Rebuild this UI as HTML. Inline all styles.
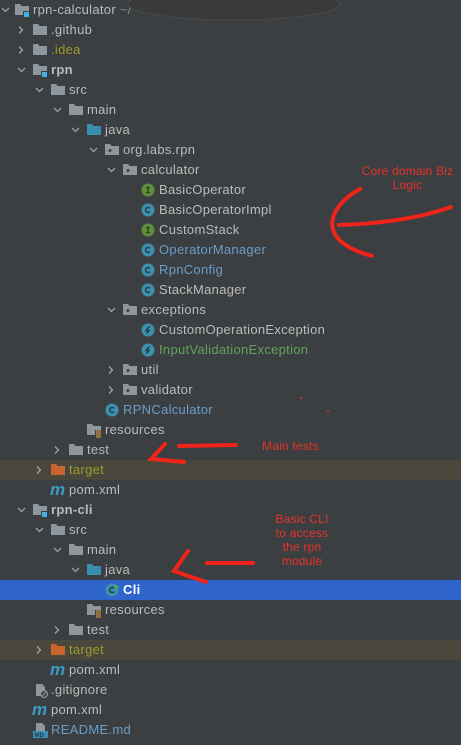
<!DOCTYPE html>
<html><head><meta charset="utf-8"><style>
body{margin:0;width:461px;height:745px;background:#3c3f41;overflow:hidden;position:relative;font-family:"Liberation Sans",sans-serif;font-size:13px;color:#bbbbbb}
.r{position:absolute;left:0;width:461px;height:20px;line-height:20px;white-space:nowrap}
.r svg{position:absolute;top:0}
.t{position:absolute;top:0;letter-spacing:0.3px}
.hl{background:#4a483c}
.sel{background:#2f65ca;color:#fff}
.b{font-weight:bold}
.ol{color:#9c9b2a}
.bl{color:#6a9dc8}
.gr{color:#62a35c}
.red{position:absolute;color:#e8322a;font-size:12px;text-align:center;line-height:14px;letter-spacing:0.2px}
</style></head><body>
<svg width="0" height="0" style="position:absolute">
<defs>
<symbol id="f" viewBox="0 0 16 20"><path d="M1 4h5l1.5 2H15v9H1z" fill="#8e979e"/></symbol>
<symbol id="fm" viewBox="0 0 16 20"><path d="M1 4h5l1.5 2H15v9H1z" fill="#8e979e"/><rect x="9" y="11" width="6" height="6" fill="#3c3f41"/><rect x="10" y="12" width="5" height="5" fill="#3fb1e3"/></symbol>
<symbol id="fb" viewBox="0 0 16 20"><path d="M1 4h5l1.5 2H15v9H1z" fill="#3a8fb1"/></symbol>
<symbol id="fo" viewBox="0 0 16 20"><path d="M1 4h5l1.5 2H15v9H1z" fill="#c8652e"/></symbol>
<symbol id="fp" viewBox="0 0 16 20"><path d="M1 4h5l1.5 2H15v9H1z" fill="#8e979e"/><circle cx="6" cy="10.5" r="1.5" fill="#3c3f41"/></symbol>
<symbol id="fr" viewBox="0 0 16 20"><path d="M1 4h5l1.5 2H15v9H1z" fill="#8e979e"/><rect x="9" y="10" width="7" height="8" fill="#3c3f41"/><path d="M10 11h5M10 13h5M10 15h5M10 17h5" stroke="#e0a040" stroke-width="1"/></symbol>
<symbol id="ch" viewBox="0 0 10 20"><path d="M2 8l3.5 3.5L9 8" fill="none" stroke="#a0a3a5" stroke-width="1.3"/></symbol>
<symbol id="cr" viewBox="0 0 10 20"><path d="M3 6.5l3.5 3.5L3 13.5" fill="none" stroke="#a0a3a5" stroke-width="1.3"/></symbol>
<symbol id="ci" viewBox="0 0 16 20"><circle cx="7" cy="10" r="6.5" fill="#5f8f3c"/><path d="M5 7.5h4M7 7.5v5M5 12.5h4" stroke="#2d3b22" stroke-width="1.3"/></symbol>
<symbol id="cc" viewBox="0 0 16 20"><circle cx="7" cy="10" r="6.5" fill="#3d8fb0"/><path d="M9 8.3a2.5 2.5 0 1 0 0 3.4" fill="none" stroke="#1f3b4a" stroke-width="1.4"/></symbol>
<symbol id="ce" viewBox="0 0 16 20"><circle cx="7" cy="10" r="6.5" fill="#3d8fb0"/><path d="M8.5 6.5L5 10.5h3L5.5 13.5" fill="none" stroke="#1f3b4a" stroke-width="1.4"/></symbol>
<symbol id="cm" viewBox="0 0 16 20"><text x="0" y="15" font-family="Liberation Sans" font-style="italic" font-weight="bold" font-size="17" fill="#3a9cc4">m</text></symbol>
</defs></svg>

<div class="r" style="top:0"><svg style="left:0" width="10" height="20"><use href="#ch"/></svg><svg style="left:14px" width="16" height="20"><use href="#fm"/></svg><span class="t" style="left:33px">rpn-calculator <span style="color:#888">~/</span></span></div>
<div class="r" style="top:20px"><svg style="left:16px" width="10" height="20"><use href="#cr"/></svg><svg style="left:32px" width="16" height="20"><use href="#f"/></svg><span class="t" style="left:51px">.github</span></div>
<div class="r" style="top:40px"><svg style="left:16px" width="10" height="20"><use href="#cr"/></svg><svg style="left:32px" width="16" height="20"><use href="#f"/></svg><span class="t ol" style="left:51px">.idea</span></div>
<div class="r" style="top:60px"><svg style="left:16px" width="10" height="20"><use href="#ch"/></svg><svg style="left:32px" width="16" height="20"><use href="#fm"/></svg><span class="t b" style="left:51px">rpn</span></div>
<div class="r" style="top:80px"><svg style="left:34px" width="10" height="20"><use href="#ch"/></svg><svg style="left:50px" width="16" height="20"><use href="#f"/></svg><span class="t" style="left:69px">src</span></div>
<div class="r" style="top:100px"><svg style="left:52px" width="10" height="20"><use href="#ch"/></svg><svg style="left:68px" width="16" height="20"><use href="#f"/></svg><span class="t" style="left:87px">main</span></div>
<div class="r" style="top:120px"><svg style="left:70px" width="10" height="20"><use href="#ch"/></svg><svg style="left:86px" width="16" height="20"><use href="#fb"/></svg><span class="t" style="left:105px">java</span></div>
<div class="r" style="top:140px"><svg style="left:88px" width="10" height="20"><use href="#ch"/></svg><svg style="left:104px" width="16" height="20"><use href="#fp"/></svg><span class="t" style="left:123px">org.labs.rpn</span></div>
<div class="r" style="top:160px"><svg style="left:106px" width="10" height="20"><use href="#ch"/></svg><svg style="left:122px" width="16" height="20"><use href="#fp"/></svg><span class="t" style="left:141px">calculator</span></div>
<div class="r" style="top:180px"><svg style="left:141px" width="16" height="20"><use href="#ci"/></svg><span class="t" style="left:159px">BasicOperator</span></div>
<div class="r" style="top:200px"><svg style="left:141px" width="16" height="20"><use href="#cc"/></svg><span class="t" style="left:159px">BasicOperatorImpl</span></div>
<div class="r" style="top:220px"><svg style="left:141px" width="16" height="20"><use href="#ci"/></svg><span class="t" style="left:159px">CustomStack</span></div>
<div class="r" style="top:240px"><svg style="left:141px" width="16" height="20"><use href="#cc"/></svg><span class="t bl" style="left:159px">OperatorManager</span></div>
<div class="r" style="top:260px"><svg style="left:141px" width="16" height="20"><use href="#cc"/></svg><span class="t bl" style="left:159px">RpnConfig</span></div>
<div class="r" style="top:280px"><svg style="left:141px" width="16" height="20"><use href="#cc"/></svg><span class="t" style="left:159px">StackManager</span></div>
<div class="r" style="top:300px"><svg style="left:106px" width="10" height="20"><use href="#ch"/></svg><svg style="left:122px" width="16" height="20"><use href="#fp"/></svg><span class="t" style="left:141px">exceptions</span></div>
<div class="r" style="top:320px"><svg style="left:141px" width="16" height="20"><use href="#ce"/></svg><span class="t" style="left:159px">CustomOperationException</span></div>
<div class="r" style="top:340px"><svg style="left:141px" width="16" height="20"><use href="#ce"/></svg><span class="t gr" style="left:159px">InputValidationException</span></div>
<div class="r" style="top:360px"><svg style="left:106px" width="10" height="20"><use href="#cr"/></svg><svg style="left:122px" width="16" height="20"><use href="#fp"/></svg><span class="t" style="left:141px">util</span></div>
<div class="r" style="top:380px"><svg style="left:106px" width="10" height="20"><use href="#cr"/></svg><svg style="left:122px" width="16" height="20"><use href="#fp"/></svg><span class="t" style="left:141px">validator</span></div>
<div class="r" style="top:400px"><svg style="left:105px" width="16" height="20"><use href="#cc"/></svg><span class="t bl" style="left:123px">RPNCalculator</span></div>
<div class="r" style="top:420px"><svg style="left:86px" width="16" height="20"><use href="#fr"/></svg><span class="t" style="left:105px">resources</span></div>
<div class="r" style="top:440px"><svg style="left:52px" width="10" height="20"><use href="#cr"/></svg><svg style="left:68px" width="16" height="20"><use href="#f"/></svg><span class="t" style="left:87px">test</span></div>
<div class="r hl" style="top:460px"><svg style="left:34px" width="10" height="20"><use href="#cr"/></svg><svg style="left:50px" width="16" height="20"><use href="#fo"/></svg><span class="t ol" style="left:69px">target</span></div>
<div class="r" style="top:480px"><svg style="left:50px" width="16" height="20"><use href="#cm"/></svg><span class="t" style="left:69px">pom.xml</span></div>
<div class="r" style="top:500px"><svg style="left:16px" width="10" height="20"><use href="#ch"/></svg><svg style="left:32px" width="16" height="20"><use href="#fm"/></svg><span class="t b" style="left:51px">rpn-cli</span></div>
<div class="r" style="top:520px"><svg style="left:34px" width="10" height="20"><use href="#ch"/></svg><svg style="left:50px" width="16" height="20"><use href="#f"/></svg><span class="t" style="left:69px">src</span></div>
<div class="r" style="top:540px"><svg style="left:52px" width="10" height="20"><use href="#ch"/></svg><svg style="left:68px" width="16" height="20"><use href="#f"/></svg><span class="t" style="left:87px">main</span></div>
<div class="r" style="top:560px"><svg style="left:70px" width="10" height="20"><use href="#ch"/></svg><svg style="left:86px" width="16" height="20"><use href="#fb"/></svg><span class="t" style="left:105px">java</span></div>
<div class="r sel" style="top:580px"><svg style="left:105px" width="16" height="20"><use href="#cc"/><path d="M10 4l4 3-4 3z" fill="#4caf50"/></svg><span class="t b" style="left:123px">Cli</span></div>
<div class="r" style="top:600px"><svg style="left:86px" width="16" height="20"><use href="#fr"/></svg><span class="t" style="left:105px">resources</span></div>
<div class="r" style="top:620px"><svg style="left:52px" width="10" height="20"><use href="#cr"/></svg><svg style="left:68px" width="16" height="20"><use href="#f"/></svg><span class="t" style="left:87px">test</span></div>
<div class="r hl" style="top:640px"><svg style="left:34px" width="10" height="20"><use href="#cr"/></svg><svg style="left:50px" width="16" height="20"><use href="#fo"/></svg><span class="t ol" style="left:69px">target</span></div>
<div class="r" style="top:660px"><svg style="left:50px" width="16" height="20"><use href="#cm"/></svg><span class="t" style="left:69px">pom.xml</span></div>
<div class="r" style="top:680px"><svg style="left:33px" width="16" height="20"><path d="M3 4h6l3 3v9H3z" fill="#8e979e"/><circle cx="11" cy="14" r="3.5" fill="#3c3f41" stroke="#8e979e" stroke-width="1.2"/><path d="M9 16l4-4" stroke="#8e979e"/></svg><span class="t" style="left:51px">.gitignore</span></div>
<div class="r" style="top:700px"><svg style="left:32px" width="16" height="20"><use href="#cm"/></svg><span class="t" style="left:51px">pom.xml</span></div>
<div class="r" style="top:720px"><svg style="left:32px" width="18" height="20"><path d="M4 3h6l3 3v5H4z" fill="#8e979e"/><rect x="1" y="11" width="15" height="7" fill="#3a8fb1"/><text x="2.5" y="17" font-size="6" font-family="Liberation Sans" font-weight="bold" fill="#1f3b4a">MD</text></svg><span class="t bl" style="left:51px">README.md</span></div>

<svg style="position:absolute;left:0;top:0" width="461" height="745">
<ellipse cx="234" cy="4" rx="106" ry="16" fill="#3b3a3a" stroke="#4a4a4a"/>
<g fill="none" stroke="#f0241a" stroke-width="4" stroke-linecap="round">
<path d="M360 189C330 205 312 240 372 256"/>
<path d="M339 225C380 224 420 218 451 207"/>
<path d="M165 444L151 459L184 462"/>
<path d="M179 446L236 445"/>
<path d="M188 551L174 571L206 582"/>
<path d="M207 563L253 563"/>
</g>
<circle cx="301" cy="398" r="1" fill="#e8322a"/><circle cx="328" cy="411" r="1" fill="#e8322a"/>
</svg>
<div class="red" style="left:350px;top:164px;width:115px">Core domain Biz<br>Logic</div>
<div class="red" style="left:262px;top:439px">Main tests</div>
<div class="red" style="left:262px;top:512px;width:80px">Basic CLI<br>to access<br>the rpn<br>module</div>
</body></html>
